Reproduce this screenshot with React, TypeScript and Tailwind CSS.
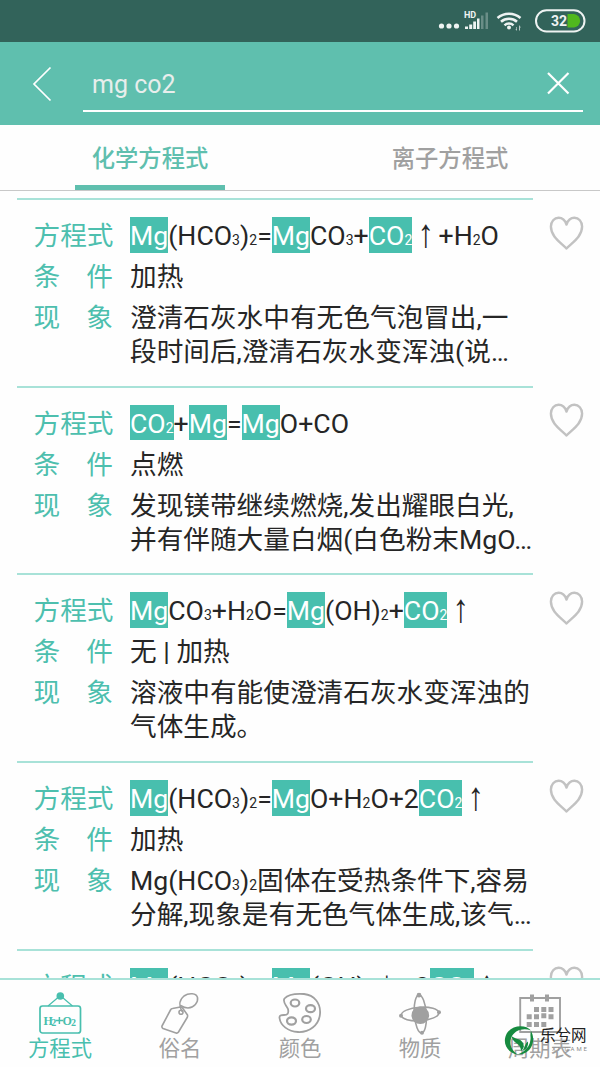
import React from 'react';

const CJK = 'font-["Roboto","Noto_Sans_CJK_SC",sans-serif]';

interface Reaction {
  equation: string;
  condition: string;
  lines: string[];
}

// [..] marks a search hit, _n is a small subscript digit
const reactions: Reaction[] = [
  {
    equation: '[Mg](HCO_3)_2=[Mg]CO_3+[CO_2] ↑ +H_2O',
    condition: '加热',
    lines: ['澄清石灰水中有无色气泡冒出,一', '段时间后,澄清石灰水变浑浊(说…'],
  },
  {
    equation: '[CO_2]+[Mg]=[Mg]O+CO',
    condition: '点燃',
    lines: ['发现镁带继续燃烧,发出耀眼白光,', '并有伴随大量白烟(白色粉末MgO…'],
  },
  {
    equation: '[Mg]CO_3+H_2O=[Mg](OH)_2+[CO_2] ↑',
    condition: '无 | 加热',
    lines: ['溶液中有能使澄清石灰水变浑浊的', '气体生成。'],
  },
  {
    equation: '[Mg](HCO_3)_2=[Mg]O+H_2O+2[CO_2] ↑',
    condition: '加热',
    lines: ['Mg(HCO_3)_2固体在受热条件下,容易', '分解,现象是有无色气体生成,该气…'],
  },
];

const nextEquation = '[Mg](HCO_3)_2=[Mg](OH)_2 ↓ +2[CO_2] ↑';

const Formula: React.FC<{ text: string }> = ({ text }) => (
  <>
    {text.split(/(\[[^\]]*\]|_\d|[↑↓])/).map((part, i) => {
      if (part.startsWith('[')) {
        return (
          <span key={i} className="inline-block h-[35.5px] bg-[#48bfae] align-top leading-[38px] text-white">
            <Formula text={part.slice(1, -1)} />
          </span>
        );
      }
      if (part.startsWith('_')) return <span key={i} className="text-[14px]">{part.slice(1)}</span>;
      if (part === '↑' || part === '↓') {
        return <span key={i} className="inline-block w-[13px] -translate-y-0.5 scale-x-125 scale-y-150 text-center font-['Liberation_Serif',serif] leading-none">{part}</span>;
      }
      return <React.Fragment key={i}>{part}</React.Fragment>;
    })}
  </>
);

const Label: React.FC<{ children: string }> = ({ children }) => (
  <div className="-ml-[0.5px] flex w-[79.500px] shrink-0 justify-between text-[#4dbfae]">
    {children.split('').map((c) => <span key={c}>{c}</span>)}
  </div>
);

const Heart = () => (
  <svg width="36" height="36" viewBox="0 0 36 36" fill="none" stroke="#c2c2c2" strokeWidth="2.4" strokeLinejoin="round">
    <path d="M17.500 32.500C12.500 27 1.900 21 1.900 10.600C1.900 5.400 5.400 1.800 9.600 1.800C13 1.800 16 4 17.500 8.500C19 4 22 1.800 25.400 1.800C29.600 1.800 33.100 5.400 33.100 10.600C33.100 21 22.500 27 17.500 32.500Z" />
  </svg>
);

const ReactionRow: React.FC<{ equation: string; children?: React.ReactNode }> = ({ equation, children }) => (
  <div className="flex h-[187.6px] shrink-0 pl-[17px]">
    <div className="w-[516px] shrink-0 whitespace-nowrap border-t-2 border-[#a8e2d8] pl-[17px] pt-[17px] text-[26.67px] leading-[38px] text-[#262626]">
      <div className="flex h-[41px] gap-[17px]">
        <Label>方程式</Label>
        <div><Formula text={equation} /></div>
      </div>
      {children}
    </div>
    <div className="pl-[16px] pt-[17.5px]"><Heart /></div>
  </div>
);

const StatusBar = () => (
  <div className="flex h-[42px] shrink-0 bg-[#32635a]">
    <svg width="600" height="42" viewBox="0 0 600 42" fill="#eef3f2">
      <circle cx="441.500" cy="26" r="2.600" />
      <circle cx="449" cy="26" r="2.600" />
      <circle cx="456.500" cy="26" r="2.600" />
      <text x="464" y="18" fontSize="9" fontWeight="700" fontFamily="Roboto, sans-serif">HD</text>
      <path d="M465 26.500h3v2.500h-3zM469.200 24.500h3v4.500h-3zM473.200 21.500h2.800v7.500h-2.800zM477 18.500h2.500v10.500h-2.500z" />
      <path d="M481 15.500h2.500v13.500h-2.500zM485.500 12.500h2.500v16.500h-2.500z" opacity=".3" />
      <g fill="none" stroke="#eef3f2" strokeWidth="2.500">
        <path d="M497.500 18C504 12.300 514 12.300 520.500 18" />
        <path d="M501 21.800C505.500 17.800 512.500 17.800 517 21.800" />
        <path d="M504.500 25.300C507 23 511 23 513.500 25.300" />
      </g>
      <circle cx="509" cy="27.500" r="2" />
      <path d="M519 25l2 2.500h-1v3h-1zM517 31l-1.700-2h1v-2h.7z" opacity=".7" />
      <rect x="536" y="10.300" width="48.500" height="21.200" rx="10.600" fill="none" stroke="#eef3f2" strokeWidth="2" />
      <path d="M567.500 14h6.500a7 6.800 0 0 1 0 13.500h-6.500z" fill="#50b81e" />
      <text x="551" y="25.700" fontSize="14" fontWeight="700" fontFamily="Roboto, sans-serif">32</text>
    </svg>
  </div>
);

const EquationIcon = () => (
  <svg width="44" height="44" viewBox="0 0 44 44" fill="none" stroke="#48bfae" strokeWidth="1.700">
    <circle cx="22.300" cy="5" r="3.800" fill="#48bfae" stroke="none" />
    <path d="M10 15L20 6.500M34.500 15L24.500 6.500" strokeWidth="1.200" />
    <rect x="2" y="15" width="40.500" height="27" rx="2.500" />
    <path d="M17.800 29.500h7.200M21.400 26v7" strokeWidth="1.500" />
    <g fill="#48bfae" stroke="none" fontWeight="700" fontFamily="Liberation Serif, serif">
      <text x="5.500" y="34" fontSize="12">H</text>
      <text x="13.300" y="35.300" fontSize="10">2</text>
      <text x="24.500" y="34" fontSize="12">O</text>
      <text x="33" y="35.300" fontSize="10">2</text>
    </g>
  </svg>
);

const TagIcon = () => (
  <svg width="44" height="44" viewBox="0 0 44 44" fill="none" stroke="#a0a0a0" strokeWidth="1.600" strokeLinejoin="round">
    <path d="M14.500 17.500L22.500 16Q23.500 16 24.500 17L29.500 24Q29.800 25.500 29.200 26.500L20.500 41Q19.500 42.500 18 42L5 37.500Q3.500 36.500 4 35L12.500 19Q13.200 17.700 14.500 17.500Z" />
    <circle cx="23" cy="21.300" r="2" />
    <path d="M24 20.500C20.800 15 21 9 26 5C31 1.500 38.500 2 39.500 6.500C40.500 11.500 36 16.500 30 17C27 17 25 16 22.500 14.500" />
  </svg>
);

const PaletteIcon = () => (
  <svg width="44" height="44" viewBox="0 0 44 44" fill="none" stroke="#a0a0a0" strokeWidth="1.800">
    <path d="M6.500 7.500C10 3.500 18 2.500 26 3C36 4 43 12 42 23C41 34.500 31 41.500 20 41C10 40.500 2.500 34.500 1.500 27C1.200 24.500 3 24 6 24C9.500 24 11 22.500 10 18C9 15 4 11 6.500 7.500Z" />
    <ellipse cx="17" cy="12" rx="4.300" ry="3.500" strokeWidth="2.200" />
    <ellipse cx="32.500" cy="17.700" rx="4.500" ry="3.500" strokeWidth="2.200" />
    <ellipse cx="13.500" cy="30" rx="4.500" ry="3.600" strokeWidth="2.200" />
    <ellipse cx="28.500" cy="28.500" rx="4.300" ry="3.500" strokeWidth="2.200" />
  </svg>
);

const AtomIcon = () => (
  <svg width="44" height="44" viewBox="0 0 44 44" fill="none" stroke="#a0a0a0" strokeWidth="1.600">
    <ellipse cx="22" cy="23" rx="18.800" ry="6.800" transform="rotate(-4 22 23)" />
    <ellipse cx="22.300" cy="23" rx="6" ry="19" transform="rotate(-4 22 23)" />
    <g fill="#a0a0a0" stroke="none">
      <circle cx="22.300" cy="24.300" r="8.800" />
      <circle cx="21" cy="4.200" r="2.400" />
      <circle cx="24" cy="41.800" r="2" />
      <circle cx="3" cy="24.700" r="2" />
      <circle cx="41" cy="21.300" r="2" />
    </g>
  </svg>
);

const CalendarIcon = () => (
  <svg width="44" height="44" viewBox="0 0 44 44" fill="#a0a0a0">
    <path d="M2.200 7h39.800v34H2.200z" fill="none" stroke="#a0a0a0" strokeWidth="1.900" />
    <path d="M12 3.500h4v7h-4zM27 3.500h4v7h-4z" />
    <path d="M16 16h5v5h-5zM23.300 16h5v5h-5zM30.500 16h5v5h-5zM8.700 23.300h5v5h-5zM16 23.300h5v5h-5zM23.300 22.300h5v5h-5zM30.500 23.300h5v5h-5zM8.700 31h5v5h-5zM16 31h5v5h-5zM23.300 31h5v5h-5z" />
  </svg>
);

const navItems = [
  { label: '方程式', Icon: EquationIcon, active: true },
  { label: '俗名', Icon: TagIcon },
  { label: '颜色', Icon: PaletteIcon },
  { label: '物质', Icon: AtomIcon },
  { label: '周期表', Icon: CalendarIcon },
];

const Watermark = () => (
  <div className="absolute left-[504px] top-[1025px] flex">
    <svg width="30" height="30" viewBox="0 0 30 30" fill="#168a3f">
      <path d="M27 5.500C22-.5 9-.500 3 8C-2.500 18 3 28 14 29.500C8 26 5 20 7 13.500C9.500 5.500 19 2.500 27 5.500Z" />
      <path d="M27 6C31 13 29.500 23 22 27.500C19.500 29 17 29.500 14 29.300C21 27 27.500 20 26.500 11.500C26.300 9.500 26.500 8 27 6Z" />
      <path d="M7.500 11C11 14.500 16.500 13 19 18C20.500 21 19.500 24 17 26C17 22 14.500 19 11.500 17.500C9.500 16 8 14 7.500 11Z" />
      <path d="M18.500 26C22.500 24.500 24.500 21 24 16.500C21.500 18 20.800 22 18.500 26Z" />
    </svg>
    <div className="pl-1.5 pt-px text-[#202020]">
      <div className="text-[15.500px] leading-5">乐兮网</div>
      <div className="whitespace-nowrap pl-3 text-[6px] leading-[6px] tracking-[1.9px] text-[#8c8c8c]">XI GAME</div>
    </div>
  </div>
);

export default function App() {
  return (
    <div className={`relative flex h-[1067px] w-[600px] flex-col overflow-hidden bg-[#fefefe] ${CJK}`}>
      <StatusBar />
      <header className="flex h-[83px] shrink-0 bg-[#5fbfae] pl-[32px] pt-[24px]">
        <svg width="20" height="36" viewBox="0 0 20 36" fill="none" stroke="#fff" strokeWidth="1.700">
          <path d="M18.500 1.500L2 18L18.500 34.500" />
        </svg>
        <div className="ml-[31px] flex h-[46px] w-[500px] justify-between border-b-2 border-white pl-[9px] pr-[13px]">
          <span className="text-[25px] leading-[38px] text-[#e8eeec]">mg co2</span>
          <svg width="24" height="36" viewBox="0 0 24 36" fill="none" stroke="#fff" strokeWidth="2.200">
            <path d="M2 7L22.500 27.500M22.500 7L2 27.500" />
          </svg>
        </div>
      </header>
      <nav className="flex h-[66px] shrink-0 border-b border-[#c8c8c8] text-[23.300px] font-medium leading-[68px]">
        <div className="flex w-1/2 justify-center">
          <div className="h-[65px] w-[150px] border-b-[5px] border-[#5fbfae] text-center text-[#5fbfae]">化学方程式</div>
        </div>
        <div className="w-1/2 text-center text-[#a0a0a0]">离子方程式</div>
      </nav>
      <main className="flex min-h-0 flex-1 flex-col overflow-hidden pt-[7.300px]">
        {reactions.map((r) => (
          <ReactionRow key={r.equation} equation={r.equation}>
            <div className="flex h-[41px] gap-[17px]">
              <Label>条件</Label>
              <div>{r.condition}</div>
            </div>
            <div className="flex gap-[17px]">
              <Label>现象</Label>
              <div>
                {r.lines.map((line) => (
                  <div key={line} className="h-[34px]"><Formula text={line} /></div>
                ))}
              </div>
            </div>
          </ReactionRow>
        ))}
        <ReactionRow equation={nextEquation} />
      </main>
      <footer className="flex h-[89px] shrink-0 border-t-2 border-[#a8e2d8] bg-[#fefefe]">
        {navItems.map(({ label, Icon, active }) => (
          <div key={label} className={`flex w-[120px] flex-col items-center pt-[11px] text-[21.300px] leading-[28px] ${active ? 'text-[#48bfae]' : 'text-[#a0a0a0]'}`}>
            <Icon />
            <span>{label}</span>
          </div>
        ))}
      </footer>
      <Watermark />
    </div>
  );
}
